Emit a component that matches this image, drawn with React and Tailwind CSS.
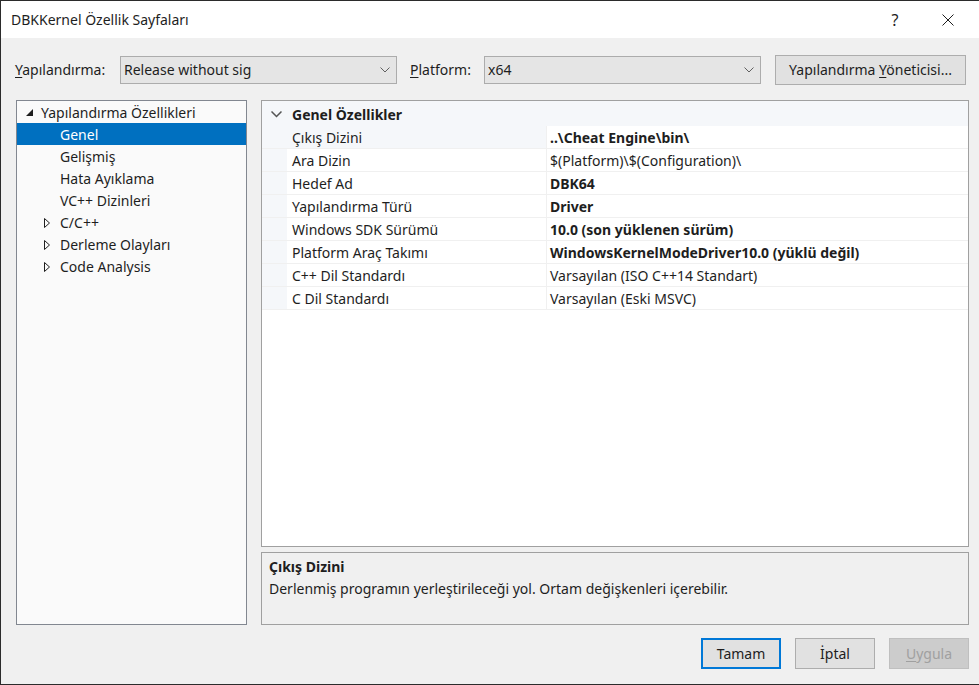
import React from 'react';

const treeChildren = [
  { label: 'Genel', selected: true },
  { label: 'Gelişmiş' },
  { label: 'Hata Ayıklama' },
  { label: 'VC++ Dizinleri' },
  { label: 'C/C++', expandable: true },
  { label: 'Derleme Olayları', expandable: true },
  { label: 'Code Analysis', expandable: true },
];

const properties = [
  { name: 'Çıkış Dizini', value: '..\\Cheat Engine\\bin\\', bold: true, selected: true },
  { name: 'Ara Dizin', value: '$(Platform)\\$(Configuration)\\' },
  { name: 'Hedef Ad', value: 'DBK64', bold: true },
  { name: 'Yapılandırma Türü', value: 'Driver', bold: true },
  { name: 'Windows SDK Sürümü', value: '10.0 (son yüklenen sürüm)', bold: true },
  { name: 'Platform Araç Takımı', value: 'WindowsKernelModeDriver10.0 (yüklü değil)', bold: true },
  { name: 'C++ Dil Standardı', value: 'Varsayılan (ISO C++14 Standart)' },
  { name: 'C Dil Standardı', value: 'Varsayılan (Eski MSVC)' },
];

function ComboArrow() {
  return (
    <svg width="10" height="6" viewBox="0 0 10 6" fill="none">
      <polyline points="0.5,0.5 5,5 9.5,0.5" stroke="#606060" strokeWidth="1" />
    </svg>
  );
}

function Combo({ value }) {
  return (
    <div className="w-[277px] h-[28px] flex items-center justify-between pl-[3px] pr-[6px] bg-[#e5e5e5] border border-[#acacac]">
      <span>{value}</span>
      <ComboArrow />
    </div>
  );
}

function ExpandedGlyph() {
  return (
    <svg width="8" height="8" viewBox="0 0 8 8">
      <polygon points="7,0 7,7 0,7" fill="#1e1e1e" />
    </svg>
  );
}

function CollapsedGlyph() {
  return (
    <svg width="7" height="10" viewBox="0 0 7 10" fill="none">
      <polygon points="0.5,0.5 5.5,5 0.5,9.5" stroke="#1e1e1e" strokeWidth="1" />
    </svg>
  );
}

function TreeRow({ item }) {
  return (
    <div
      className={
        'h-[22px] flex items-center pt-[2px] ' +
        (item.selected ? 'bg-[#0070c0] text-white' : 'text-[#1e1e1e]')
      }
    >
      <div className="w-[43px] flex justify-end pr-[9px]">
        {item.expandable && <CollapsedGlyph />}
      </div>
      <span>{item.label}</span>
    </div>
  );
}

function PropertyRow({ prop }) {
  return (
    <div className="h-[23px] flex border-b border-[#f0f0f0]">
      <div className="w-[25px] bg-[#f5f7fa]" />
      <div
        className={
          'w-[259px] flex items-center pl-[5px] pt-[2px] ' +
          (prop.selected ? 'bg-[#f5f7fa]' : 'bg-white')
        }
      >
        {prop.name}
      </div>
      <div
        className={
          'flex-1 flex items-center pl-[3px] pt-[2px] border-l border-[#f0f0f0] ' +
          (prop.bold ? 'font-bold' : '')
        }
      >
        {prop.value}
      </div>
    </div>
  );
}

export default function App() {
  return (
    <div
      className="w-[979px] h-[685px] flex flex-col bg-[#f0f0f0] border-t border-l border-b border-[#2b2b2b] text-[14px] leading-none text-[#1e1e1e] overflow-hidden"
      style={{ fontFamily: '"Noto Sans", "Open Sans", sans-serif' }}
    >
      {/* title bar */}
      <div className="h-[37px] shrink-0 bg-white flex items-center pl-[10px]">
        <span className="flex-1">DBKKernel Özellik Sayfaları</span>
        <span className="w-[56px] text-center text-[16px]">?</span>
        <div className="w-[56px] flex justify-center pr-[6px]">
          <svg width="12" height="12" viewBox="0 0 12 12" fill="none">
            <line x1="0.5" y1="0.5" x2="11.5" y2="11.5" stroke="#1e1e1e" strokeWidth="1" />
            <line x1="11.5" y1="0.5" x2="0.5" y2="11.5" stroke="#1e1e1e" strokeWidth="1" />
          </svg>
        </div>
      </div>

      {/* configuration / platform row */}
      <div className="flex items-center pl-[14px] mt-[16px] h-[31px]">
        <span className="w-[105px]">
          <span className="underline underline-offset-2">Y</span>apılandırma:
        </span>
        <Combo value="Release without sig" />
        <span className="ml-[13px] w-[74px]">
          <span className="underline underline-offset-2">P</span>latform:
        </span>
        <Combo value="x64" />
        <button className="ml-[14px] w-[191px] h-[30px] bg-[#e1e1e1] border border-[#adadad] text-[#1e1e1e]">
          Yapılandırma <span className="underline underline-offset-2">Y</span>öneticisi...
        </button>
      </div>

      {/* tree + property grid */}
      <div className="flex mt-[15px] pl-[15px] gap-[14px]">
        <div className="w-[231px] h-[525px] bg-[#fafafa] border border-[#828790] flex flex-col">
          <div className="h-[22px] flex items-center pt-[2px]">
            <div className="w-[24px] flex justify-end pr-[7px]">
              <ExpandedGlyph />
            </div>
            <span>Yapılandırma Özellikleri</span>
          </div>
          {treeChildren.map((item) => (
            <TreeRow key={item.label} item={item} />
          ))}
        </div>

        <div className="w-[708px] flex flex-col gap-[5px]">
          <div className="h-[447px] bg-white border border-[#a0a0a0] flex flex-col">
            <div className="h-[25px] bg-[#f5f7fa] flex items-center pt-[2px] font-bold">
              <div className="w-[30px] flex justify-end pr-[10px]">
                <svg width="11" height="7" viewBox="0 0 11 7" fill="none">
                  <polyline points="0.5,0.5 5.5,5.5 10.5,0.5" stroke="#555555" strokeWidth="1.5" />
                </svg>
              </div>
              <span>Genel Özellikler</span>
            </div>
            {properties.map((prop) => (
              <PropertyRow key={prop.name} prop={prop} />
            ))}
          </div>

          <div className="h-[73px] border border-[#a0a0a0] bg-[#f0f0f0] px-[7px] pt-[7px] flex flex-col gap-[8px]">
            <span className="font-bold">Çıkış Dizini</span>
            <span>Derlenmiş programın yerleştirileceği yol. Ortam değişkenleri içerebilir.</span>
          </div>
        </div>
      </div>

      {/* dialog buttons */}
      <div className="flex justify-end gap-[14px] mt-[13px] pr-[10px]">
        <button className="w-[80px] h-[31px] bg-[#e1e1e1] border-2 border-[#0078d7] text-[#1e1e1e]">
          Tamam
        </button>
        <button className="w-[80px] h-[31px] bg-[#e1e1e1] border border-[#adadad] text-[#1e1e1e]">
          İptal
        </button>
        <button className="w-[80px] h-[31px] bg-[#cccccc] border border-[#bfbfbf] text-[#a0a0a0]">
          <span className="underline underline-offset-2">U</span>ygula
        </button>
      </div>
    </div>
  );
}
